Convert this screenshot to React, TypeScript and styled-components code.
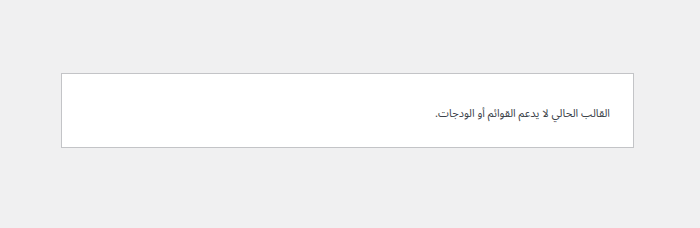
import React from "react";
import styled, { createGlobalStyle } from "styled-components";

const Global = createGlobalStyle`
  html, body { margin: 0; padding: 0; background: #f0f0f1; }
  body { font-family: "Noto Sans Arabic", "DejaVu Sans", sans-serif; }
`;

const Page = styled.div`
  height: 228px;
  padding: 73px 66px 0 61px;
  box-sizing: border-box;
`;

const Notice = styled.div`
  direction: rtl;
  background: #fff;
  border: 1px solid #c3c4c7;
  height: 75px;
  box-sizing: border-box;
  display: flex;
  align-items: center;
  padding: 8px 23px 0 23px;
`;

const Message = styled.p`
  margin: 0;
  font-size: 11px;
  line-height: 1.5;
  color: #3c434a;
`;

export default function App() {
  return (
    <>
      <Global />
      <Page>
        <Notice>
          <Message>القالب الحالي لا يدعم القوائم أو الودجات.</Message>
        </Notice>
      </Page>
    </>
  );
}
